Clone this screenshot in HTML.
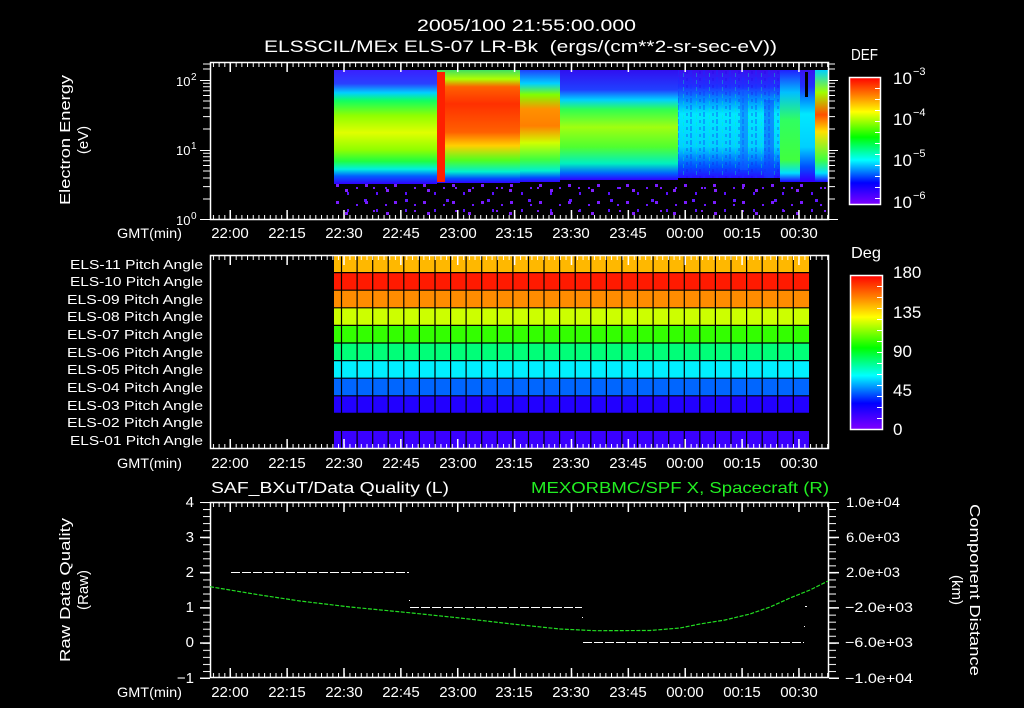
<!DOCTYPE html>
<html><head><meta charset="utf-8"><style>
html,body{margin:0;padding:0;background:#000;width:1024px;height:708px;overflow:hidden}
svg{display:block}
text{font-family:"Liberation Sans",sans-serif;fill:#fff;white-space:pre}
</style></head><body>
<svg width="1024" height="708" viewBox="0 0 1024 708" xmlns="http://www.w3.org/2000/svg">
<defs>
<pattern id="tmin" x="230" y="0" width="5.687" height="10" patternUnits="userSpaceOnUse"><rect x="0" y="0" width="1" height="10" fill="#fff"/></pattern>
<pattern id="tmaj" x="229.5" y="0" width="56.87" height="10" patternUnits="userSpaceOnUse"><rect x="0" y="0" width="1.5" height="10" fill="#fff"/></pattern>
<pattern id="ymin" x="0" y="502" width="10" height="7.04" patternUnits="userSpaceOnUse"><rect x="0" y="0" width="10" height="1" fill="#fff"/></pattern>
<pattern id="ymaj" x="0" y="501.5" width="10" height="35.2" patternUnits="userSpaceOnUse"><rect x="0" y="0" width="10" height="1.5" fill="#fff"/></pattern>
<pattern id="cbt" x="0" y="77" width="10" height="11" patternUnits="userSpaceOnUse"><rect x="0" y="0" width="10" height="1" fill="#fff"/></pattern>
<pattern id="sp1" x="334" y="183" width="29" height="17" patternUnits="userSpaceOnUse">
<rect x="2" y="1" width="3" height="3" fill="#7a1cff"/><rect x="13" y="9" width="2" height="3" fill="#5a10ff"/><rect x="22" y="4" width="2" height="2" fill="#6a18ff"/></pattern>
<pattern id="sp2" x="340" y="185" width="41" height="23" patternUnits="userSpaceOnUse">
<rect x="5" y="4" width="3" height="3" fill="#8020ff"/><rect x="24" y="14" width="3" height="3" fill="#6018ff"/><rect x="33" y="2" width="2" height="2" fill="#7a1cff"/></pattern>
<pattern id="streak" x="0" y="0" width="13" height="7" patternUnits="userSpaceOnUse">
<rect x="1" y="0" width="2" height="5" fill="#1030ff" opacity="0.35"/><rect x="7" y="3" width="1" height="4" fill="#00ffa0" opacity="0.35"/><rect x="10" y="1" width="2" height="3" fill="#2000e0" opacity="0.25"/></pattern>
<linearGradient id="gA" gradientUnits="userSpaceOnUse" x1="0" y1="70" x2="0" y2="184">
<stop offset="0" stop-color="#3a20ff"/><stop offset="0.12" stop-color="#2a40ff"/><stop offset="0.2" stop-color="#00d0ff"/><stop offset="0.27" stop-color="#10ff60"/><stop offset="0.4" stop-color="#90ff00"/><stop offset="0.55" stop-color="#e0ff00"/><stop offset="0.7" stop-color="#90ff00"/><stop offset="0.8" stop-color="#20ff40"/><stop offset="0.87" stop-color="#00f0e0"/><stop offset="0.93" stop-color="#0060ff"/><stop offset="1" stop-color="#3000ff"/></linearGradient>
<linearGradient id="gB" gradientUnits="userSpaceOnUse" x1="0" y1="70" x2="0" y2="183">
<stop offset="0" stop-color="#40e060"/><stop offset="0.08" stop-color="#b0ff00"/><stop offset="0.15" stop-color="#ff6000"/><stop offset="0.3" stop-color="#ff3000"/><stop offset="0.55" stop-color="#ff6000"/><stop offset="0.67" stop-color="#ffd000"/><stop offset="0.8" stop-color="#50ff20"/><stop offset="0.9" stop-color="#00f0d0"/><stop offset="0.96" stop-color="#0050ff"/><stop offset="1" stop-color="#3000ff"/></linearGradient>
<linearGradient id="gC" gradientUnits="userSpaceOnUse" x1="0" y1="70" x2="0" y2="182">
<stop offset="0" stop-color="#2040ff"/><stop offset="0.12" stop-color="#00d0ff"/><stop offset="0.22" stop-color="#80ff00"/><stop offset="0.35" stop-color="#ff9000"/><stop offset="0.5" stop-color="#ff8000"/><stop offset="0.65" stop-color="#d0ff00"/><stop offset="0.8" stop-color="#40ff40"/><stop offset="0.9" stop-color="#00f0d0"/><stop offset="0.96" stop-color="#0050ff"/><stop offset="1" stop-color="#3000ff"/></linearGradient>
<linearGradient id="gD" gradientUnits="userSpaceOnUse" x1="0" y1="70" x2="0" y2="180">
<stop offset="0" stop-color="#3010f0"/><stop offset="0.18" stop-color="#2040ff"/><stop offset="0.27" stop-color="#00d0ff"/><stop offset="0.36" stop-color="#30ff50"/><stop offset="0.52" stop-color="#a0ff10"/><stop offset="0.7" stop-color="#50ff30"/><stop offset="0.85" stop-color="#00f0c0"/><stop offset="0.94" stop-color="#0060ff"/><stop offset="1" stop-color="#3000ff"/></linearGradient>
<linearGradient id="gE" gradientUnits="userSpaceOnUse" x1="0" y1="70" x2="0" y2="180">
<stop offset="0" stop-color="#3a10f0"/><stop offset="0.15" stop-color="#2030ff"/><stop offset="0.27" stop-color="#0090ff"/><stop offset="0.4" stop-color="#00e8ff"/><stop offset="0.7" stop-color="#00d0ff"/><stop offset="0.88" stop-color="#0050ff"/><stop offset="1" stop-color="#3000ff"/></linearGradient>
<linearGradient id="gF" gradientUnits="userSpaceOnUse" x1="0" y1="70" x2="0" y2="182">
<stop offset="0" stop-color="#2020ff"/><stop offset="0.2" stop-color="#00c0ff"/><stop offset="0.45" stop-color="#30ff60"/><stop offset="0.8" stop-color="#40ff40"/><stop offset="0.92" stop-color="#00e0ff"/><stop offset="1" stop-color="#2000ff"/></linearGradient>
<linearGradient id="gH" gradientUnits="userSpaceOnUse" x1="0" y1="70" x2="0" y2="182">
<stop offset="0" stop-color="#00d0ff"/><stop offset="0.2" stop-color="#a0ff00"/><stop offset="0.4" stop-color="#ff5000"/><stop offset="0.55" stop-color="#ffe000"/><stop offset="0.8" stop-color="#40ff40"/><stop offset="0.92" stop-color="#00e0ff"/><stop offset="1" stop-color="#2000ff"/></linearGradient>
<linearGradient id="cb" x1="0" y1="0" x2="0" y2="1">
<stop offset="0" stop-color="#ff0000"/><stop offset="0.14" stop-color="#ff8000"/><stop offset="0.27" stop-color="#ffff00"/><stop offset="0.47" stop-color="#00ff00"/><stop offset="0.65" stop-color="#00ffff"/><stop offset="0.83" stop-color="#0000ff"/><stop offset="1" stop-color="#8000ff"/></linearGradient>
</defs>

<text x="417" y="31" font-size="17" textLength="219" lengthAdjust="spacingAndGlyphs">2005/100 21:55:00.000</text>
<text x="264" y="52" font-size="17" textLength="513" lengthAdjust="spacingAndGlyphs">ELSSCIL/MEx ELS-07 LR-Bk  (ergs/(cm**2-sr-sec-eV))</text>

<rect x="334" y="70" width="103" height="114" fill="url(#gA)"/>
<rect x="437" y="70" width="83" height="113" fill="url(#gB)"/>
<rect x="437" y="72" width="8" height="110" fill="#ff2000"/>
<rect x="520" y="70" width="40" height="112" fill="url(#gC)"/>
<rect x="560" y="70" width="118" height="110" fill="url(#gD)"/>
<rect x="678" y="70" width="102" height="108" fill="url(#gE)"/>
<rect x="678" y="70" width="102" height="108" fill="url(#streak)"/>
<rect x="740" y="90" width="8" height="80" fill="#1060ff" opacity="0.5"/>
<rect x="764" y="100" width="10" height="78" fill="#1040ff" opacity="0.5"/>
<rect x="780" y="70" width="30" height="112" fill="url(#gF)"/>
<rect x="800" y="70" width="15" height="112" fill="url(#gE)"/>
<rect x="805" y="72" width="3" height="25" fill="#000"/>
<rect x="815" y="70" width="13" height="112" fill="url(#gH)"/>
<rect x="334" y="183" width="494" height="35" fill="url(#sp1)"/>
<rect x="334" y="183" width="494" height="35" fill="url(#sp2)"/>

<rect x="210.5" y="62.5" width="618" height="157" fill="none" stroke="#fff" stroke-width="1.5"/>
<rect x="210" y="63" width="618" height="4" fill="url(#tmin)"/>
<rect x="210" y="63" width="618" height="9" fill="url(#tmaj)"/>
<rect x="210" y="215" width="618" height="4" fill="url(#tmin)"/>
<rect x="210" y="210" width="618" height="9" fill="url(#tmaj)"/>
<g stroke="#fff" stroke-width="1">
<path d="M200 80.5H210M200 150.5H210M200 219.5H210M838 80.5H829M838 150.5H829M838 219.5H829"/>
<path d="M203 83.2H210M203 86.8H210M203 90.8H210M203 95.5H210M203 101H210M203 108H210M203 116.6H210M203 129H210M203 153.2H210M203 156.8H210M203 160.8H210M203 165.5H210M203 171H210M203 178H210M203 186.6H210M203 199H210M203 64H210M203 69H210"/>
<path d="M835 83.2H829M835 86.8H829M835 90.8H829M835 95.5H829M835 101H829M835 108H829M835 116.6H829M835 129H829M835 153.2H829M835 156.8H829M835 160.8H829M835 165.5H829M835 171H829M835 178H829M835 186.6H829M835 199H829M835 64H829M835 69H829"/>
</g>
<text x="176" y="86" font-size="13">10</text><text x="191" y="80" font-size="10">2</text>
<text x="176" y="155" font-size="13">10</text><text x="191" y="149" font-size="10">1</text>
<text x="176" y="225" font-size="13">10</text><text x="191" y="219" font-size="10">0</text>
<text transform="translate(70,140) rotate(-90)" text-anchor="middle" font-size="15" textLength="130" lengthAdjust="spacingAndGlyphs">Electron Energy</text>
<text transform="translate(88,140) rotate(-90)" text-anchor="middle" font-size="15">(eV)</text>

<g font-size="14">
<text x="117" y="238" textLength="65" lengthAdjust="spacingAndGlyphs">GMT(min)</text>
<text x="117" y="468" textLength="65" lengthAdjust="spacingAndGlyphs">GMT(min)</text>
<text x="117" y="697" textLength="65" lengthAdjust="spacingAndGlyphs">GMT(min)</text>
</g>
<g font-size="15" text-anchor="middle">
<text x="230" y="238">22:00</text><text x="287" y="238">22:15</text><text x="344" y="238">22:30</text><text x="401" y="238">22:45</text><text x="458" y="238">23:00</text><text x="514" y="238">23:15</text><text x="571" y="238">23:30</text><text x="628" y="238">23:45</text><text x="685" y="238">00:00</text><text x="742" y="238">00:15</text><text x="799" y="238">00:30</text>
<text x="230" y="468">22:00</text><text x="287" y="468">22:15</text><text x="344" y="468">22:30</text><text x="401" y="468">22:45</text><text x="458" y="468">23:00</text><text x="514" y="468">23:15</text><text x="571" y="468">23:30</text><text x="628" y="468">23:45</text><text x="685" y="468">00:00</text><text x="742" y="468">00:15</text><text x="799" y="468">00:30</text>
<text x="230" y="697">22:00</text><text x="287" y="697">22:15</text><text x="344" y="697">22:30</text><text x="401" y="697">22:45</text><text x="458" y="697">23:00</text><text x="514" y="697">23:15</text><text x="571" y="697">23:30</text><text x="628" y="697">23:45</text><text x="685" y="697">00:00</text><text x="742" y="697">00:15</text><text x="799" y="697">00:30</text>
</g>

<text x="851" y="60" font-size="16" textLength="27" lengthAdjust="spacingAndGlyphs">DEF</text>
<rect x="849.5" y="77.5" width="31" height="127" fill="url(#cb)" stroke="#fff" stroke-width="1.5"/>
<rect x="875" y="82" width="5" height="121" fill="url(#cbt)"/>
<g font-size="17">
<text x="893" y="84">10</text><text x="913" y="75" font-size="11">−3</text>
<text x="893" y="125">10</text><text x="913" y="116" font-size="11">−4</text>
<text x="893" y="166">10</text><text x="913" y="157" font-size="11">−5</text>
<text x="893" y="208">10</text><text x="913" y="199" font-size="11">−6</text>
</g>

<g>
<rect x="334" y="255" width="475" height="17.6" fill="#ffb800"/>
<rect x="334" y="272.6" width="475" height="17.6" fill="#ff1a00"/>
<rect x="334" y="290.2" width="475" height="17.6" fill="#ff8c00"/>
<rect x="334" y="307.8" width="475" height="17.6" fill="#ccff00"/>
<rect x="334" y="325.4" width="475" height="17.6" fill="#33ff00"/>
<rect x="334" y="343" width="475" height="17.6" fill="#00ff78"/>
<rect x="334" y="360.6" width="475" height="17.6" fill="#00f0ff"/>
<rect x="334" y="378.2" width="475" height="17.6" fill="#0066ff"/>
<rect x="334" y="395.8" width="475" height="17.6" fill="#2200ff"/>
<rect x="334" y="431" width="475" height="18" fill="#3a00ff"/>
<g stroke="#000" stroke-width="1.2">
<path d="M334 272.6H809M334 290.2H809M334 307.8H809M334 325.4H809M334 343H809M334 360.6H809M334 378.2H809M334 395.8H809M334 413.4H809"/>
<path d="M341.5 255V413.4M357.1 255V413.4M372.7 255V413.4M388.2 255V413.4M403.8 255V413.4M419.4 255V413.4M435 255V413.4M450.6 255V413.4M466.1 255V413.4M481.7 255V413.4M497.3 255V413.4M512.9 255V413.4M528.5 255V413.4M544 255V413.4M559.6 255V413.4M575.2 255V413.4M590.8 255V413.4M606.4 255V413.4M621.9 255V413.4M637.5 255V413.4M653.1 255V413.4M668.7 255V413.4M684.3 255V413.4M699.8 255V413.4M715.4 255V413.4M731 255V413.4M746.6 255V413.4M762.2 255V413.4M777.7 255V413.4M793.3 255V413.4"/>
<path d="M341.5 431V449M357.1 431V449M372.7 431V449M388.2 431V449M403.8 431V449M419.4 431V449M435 431V449M450.6 431V449M466.1 431V449M481.7 431V449M497.3 431V449M512.9 431V449M528.5 431V449M544 431V449M559.6 431V449M575.2 431V449M590.8 431V449M606.4 431V449M621.9 431V449M637.5 431V449M653.1 431V449M668.7 431V449M684.3 431V449M699.8 431V449M715.4 431V449M731 431V449M746.6 431V449M762.2 431V449M777.7 431V449M793.3 431V449"/>
</g>
</g>
<rect x="210.5" y="255.5" width="618" height="193" fill="none" stroke="#fff" stroke-width="1.5"/>
<rect x="210" y="256" width="618" height="4" fill="url(#tmin)"/>
<rect x="210" y="256" width="618" height="9" fill="url(#tmaj)"/>
<rect x="210" y="444" width="618" height="4" fill="url(#tmin)"/>
<rect x="210" y="439" width="618" height="9" fill="url(#tmaj)"/>
<g font-size="13" text-anchor="end">
<text x="203" y="269" textLength="133" lengthAdjust="spacingAndGlyphs">ELS-11 Pitch Angle</text>
<text x="203" y="286" textLength="133" lengthAdjust="spacingAndGlyphs">ELS-10 Pitch Angle</text>
<text x="203" y="304" textLength="136" lengthAdjust="spacingAndGlyphs">ELS-09 Pitch Angle</text>
<text x="203" y="321" textLength="136" lengthAdjust="spacingAndGlyphs">ELS-08 Pitch Angle</text>
<text x="203" y="339" textLength="136" lengthAdjust="spacingAndGlyphs">ELS-07 Pitch Angle</text>
<text x="203" y="357" textLength="136" lengthAdjust="spacingAndGlyphs">ELS-06 Pitch Angle</text>
<text x="203" y="374" textLength="136" lengthAdjust="spacingAndGlyphs">ELS-05 Pitch Angle</text>
<text x="203" y="392" textLength="136" lengthAdjust="spacingAndGlyphs">ELS-04 Pitch Angle</text>
<text x="203" y="410" textLength="136" lengthAdjust="spacingAndGlyphs">ELS-03 Pitch Angle</text>
<text x="203" y="427" textLength="136" lengthAdjust="spacingAndGlyphs">ELS-02 Pitch Angle</text>
<text x="203" y="445" textLength="133" lengthAdjust="spacingAndGlyphs">ELS-01 Pitch Angle</text>
</g>

<text x="851" y="258" font-size="16" textLength="30" lengthAdjust="spacingAndGlyphs">Deg</text>
<rect x="850.5" y="275.5" width="32" height="154" fill="url(#cb)" stroke="#fff" stroke-width="1.5"/>
<rect x="877" y="279" width="5" height="150" fill="url(#cbt)"/>
<g font-size="17">
<text x="893" y="278">180</text><text x="893" y="318">135</text><text x="893" y="357">90</text><text x="893" y="396">45</text><text x="893" y="435">0</text>
</g>

<text x="211" y="493" font-size="16" textLength="238" lengthAdjust="spacingAndGlyphs">SAF_BXuT/Data Quality (L)</text>
<text x="531" y="493" font-size="16" style="fill:#22ee22" textLength="298" lengthAdjust="spacingAndGlyphs">MEXORBMC/SPF X, Spacecraft (R)</text>
<rect x="210.5" y="502.5" width="618" height="175" fill="none" stroke="#fff" stroke-width="1.5"/>
<rect x="210" y="503" width="618" height="4" fill="url(#tmin)"/>
<rect x="210" y="503" width="618" height="9" fill="url(#tmaj)"/>
<rect x="210" y="673" width="618" height="4" fill="url(#tmin)"/>
<rect x="210" y="668" width="618" height="9" fill="url(#tmaj)"/>
<rect x="203" y="502" width="7" height="177" fill="url(#ymin)"/>
<rect x="200" y="502" width="10" height="177" fill="url(#ymaj)"/>
<rect x="829" y="502" width="7" height="177" fill="url(#ymin)"/>
<rect x="829" y="502" width="10" height="177" fill="url(#ymaj)"/>
<g font-size="15" text-anchor="end">
<text x="194" y="507">4</text><text x="194" y="542">3</text><text x="194" y="577">2</text><text x="194" y="612">1</text><text x="194" y="647">0</text><text x="194" y="683">−1</text>
</g>
<g font-size="14">
<text x="846" y="507" textLength="54" lengthAdjust="spacingAndGlyphs">1.0e+04</text><text x="846" y="542" textLength="54" lengthAdjust="spacingAndGlyphs">6.0e+03</text><text x="846" y="577" textLength="54" lengthAdjust="spacingAndGlyphs">2.0e+03</text><text x="845" y="612" textLength="68" lengthAdjust="spacingAndGlyphs">−2.0e+03</text><text x="845" y="647" textLength="68" lengthAdjust="spacingAndGlyphs">−6.0e+03</text><text x="845" y="683" textLength="68" lengthAdjust="spacingAndGlyphs">−1.0e+04</text>
</g>
<text transform="translate(70,590) rotate(-90)" text-anchor="middle" font-size="15" textLength="144" lengthAdjust="spacingAndGlyphs">Raw Data Quality</text>
<text transform="translate(88,590) rotate(-90)" text-anchor="middle" font-size="15">(Raw)</text>
<text transform="translate(970,590) rotate(90)" text-anchor="middle" font-size="15" textLength="172" lengthAdjust="spacingAndGlyphs">Component Distance</text>
<text transform="translate(952,590) rotate(90)" text-anchor="middle" font-size="15">(km)</text>
<g stroke="#fff" stroke-width="1" fill="none" stroke-dasharray="9 2">
<path d="M231 572.5H409"/><path d="M410 607.5H582"/><path d="M583 642.5H804"/>
</g>
<g fill="#fff"><rect x="409" y="600" width="1" height="1"/><rect x="582" y="617" width="1" height="1"/><rect x="805" y="606" width="2" height="1"/><rect x="804" y="626" width="1" height="1"/></g>
<path d="M210 586.7L230 590L260 595L300 601L350 607L409 612.7L460 618L512 624L560 629L595 630.7L650 630.5L680 628L700 624L725 620L750 614L770 607L790 598L810 590L828 581" fill="none" stroke="#22dd22" stroke-width="1.2" stroke-dasharray="4 1.5"/>
</svg>
</body></html>
